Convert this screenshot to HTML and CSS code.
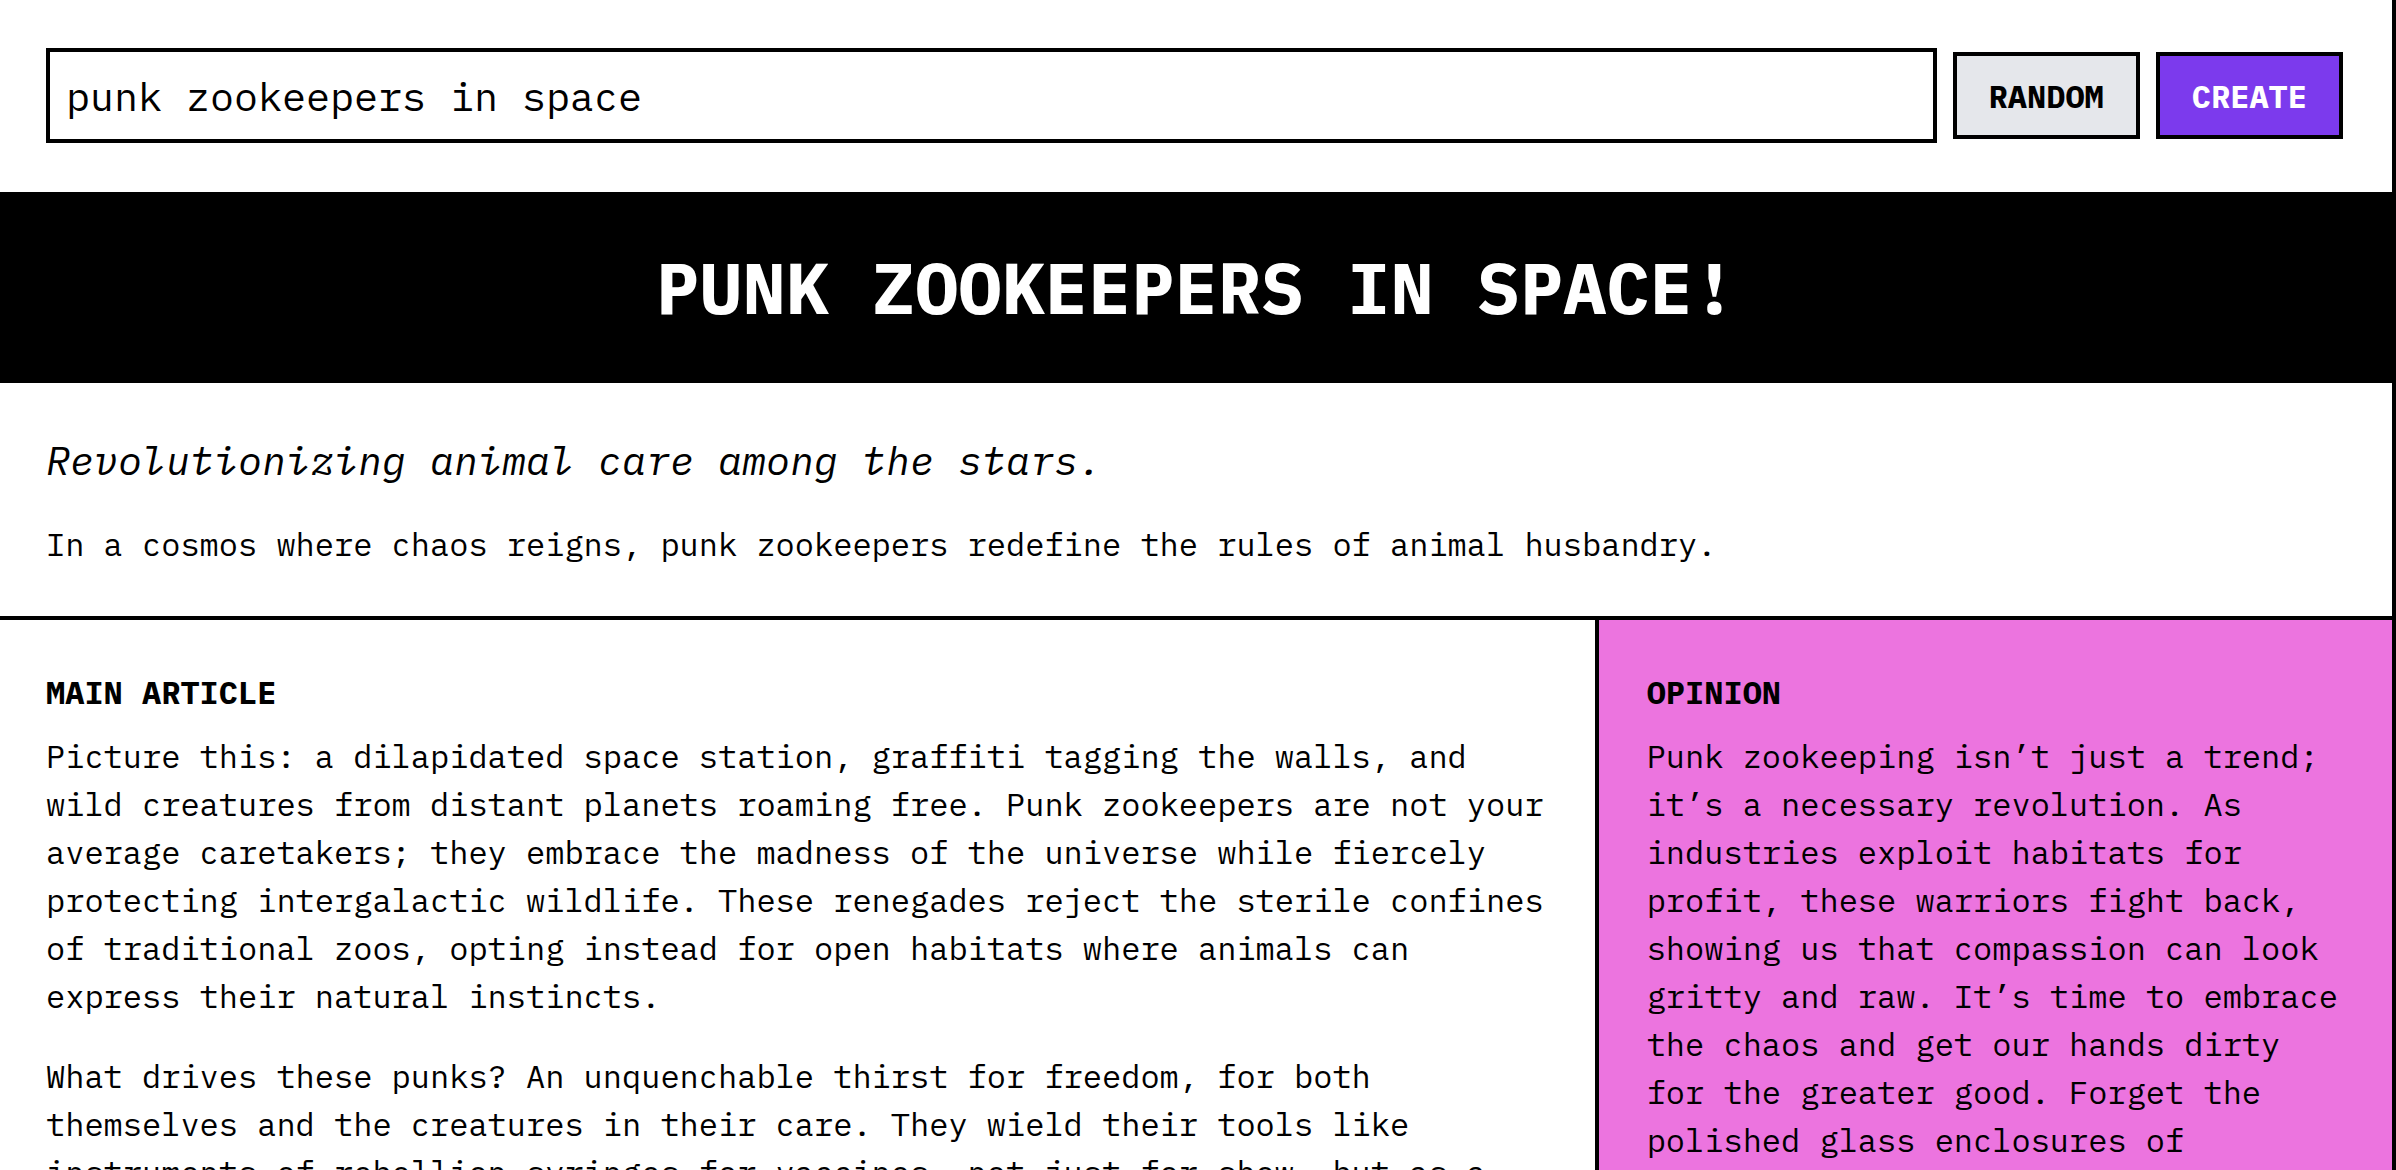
FILE: index.html
```html
<!DOCTYPE html>
<html lang="en">
<head>
<meta charset="utf-8">
<title>Punk Zookeepers in Space!</title>
<link rel="stylesheet" href="styles.css">
</head>
<body>
<div class="page">
  <header class="prompt-bar">
    <input class="prompt-input" type="text" value="punk zookeepers in space">
    <button class="btn btn-random">RANDOM</button>
    <button class="btn btn-create">CREATE</button>
  </header>

  <div class="masthead">
    <h1 class="masthead-title">PUNK ZOOKEEPERS IN SPACE!</h1>
  </div>

  <section class="intro">
    <p class="tagline">Revolutionizing animal care among the stars.</p>
    <p class="lede">In a cosmos where chaos reigns, punk zookeepers redefine the rules of animal husbandry.</p>
  </section>

  <div class="columns">
    <article class="main-article">
      <h2 class="section-label">MAIN ARTICLE</h2>
      <p class="body-text">Picture this: a dilapidated space station, graffiti tagging the walls, and wild creatures from distant planets roaming free. Punk zookeepers are not your average caretakers; they embrace the madness of the universe while fiercely protecting intergalactic wildlife. These renegades reject the sterile confines of traditional zoos, opting instead for open habitats where animals can express their natural instincts.</p>
      <p class="body-text">What drives these punks? An unquenchable thirst for freedom, for both themselves and the creatures in their care. They wield their tools like instruments of rebellion syringes for vaccines, not just for show, but as a statement against a galaxy that would rather cage what it cannot understand.</p>
    </article>
    <aside class="opinion">
      <h2 class="section-label">OPINION</h2>
      <p class="body-text">Punk zookeeping isn’t just a trend; it’s a necessary revolution. As industries exploit habitats for profit, these warriors fight back, showing us that compassion can look gritty and raw. It’s time to embrace the chaos and get our hands dirty for the greater good. Forget the polished glass enclosures of corporate zoos; the future belongs to those brave enough to tear down the walls.</p>
    </aside>
  </div>
</div>
</body>
</html>
```

FILE: styles.css
```css
html {
  overflow: hidden;
}

body {
  margin: 0;
  background: #ffffff;
  color: #000000;
  font-family: "IBM Plex Mono", "Liberation Mono", "DejaVu Sans Mono", monospace;
}

.page {
  box-sizing: border-box;
  width: 100%;
  min-height: 100vh;
  border-right: 4px solid #000000;
}

.prompt-bar {
  display: flex;
  align-items: center;
  gap: 16px;
  padding: 48px 49px 49px 46px;
}

.prompt-input {
  flex: 1;
  min-width: 0;
  box-sizing: border-box;
  height: 95px;
  margin: 0;
  padding: 0 16px;
  border: 4px solid #000000;
  border-radius: 0;
  outline: none;
  background: #ffffff;
  color: #000000;
  font-family: inherit;
  font-size: 40px;
  line-height: 60px;
}

.btn {
  box-sizing: border-box;
  height: 87px;
  margin: 0;
  padding: 0 32px;
  border: 4px solid #000000;
  border-radius: 0;
  font-family: inherit;
  font-size: 32px;
  font-weight: 700;
  line-height: 48px;
  cursor: pointer;
}

.btn-random {
  background: #e5e7eb;
  color: #000000;
}

.btn-create {
  background: #7c3aed;
  color: #ffffff;
}

.masthead {
  background: #000000;
  color: #ffffff;
  padding: 52px 0;
  text-align: center;
}

.masthead-title {
  margin: 0;
  font-size: 72px;
  font-weight: 700;
  line-height: 87px;
}

.intro {
  padding: 47px 40px 48px 46px;
}

.tagline {
  margin: 0 0 30px;
  font-size: 40px;
  font-style: italic;
  line-height: 60px;
}

.lede {
  margin: 0;
  font-size: 32px;
  line-height: 48px;
}

.columns {
  display: grid;
  grid-template-columns: 2fr 1fr;
  border-top: 4px solid #000000;
}

.main-article {
  padding: 48px 40px 48px 46px;
}

.opinion {
  background: #ec74df;
  border-left: 4px solid #000000;
  padding: 48px;
}

.section-label {
  margin: 0 0 16px;
  font-size: 32px;
  font-weight: 700;
  line-height: 48px;
}

.body-text {
  margin: 0 0 32px;
  font-size: 32px;
  line-height: 48px;
}
```
